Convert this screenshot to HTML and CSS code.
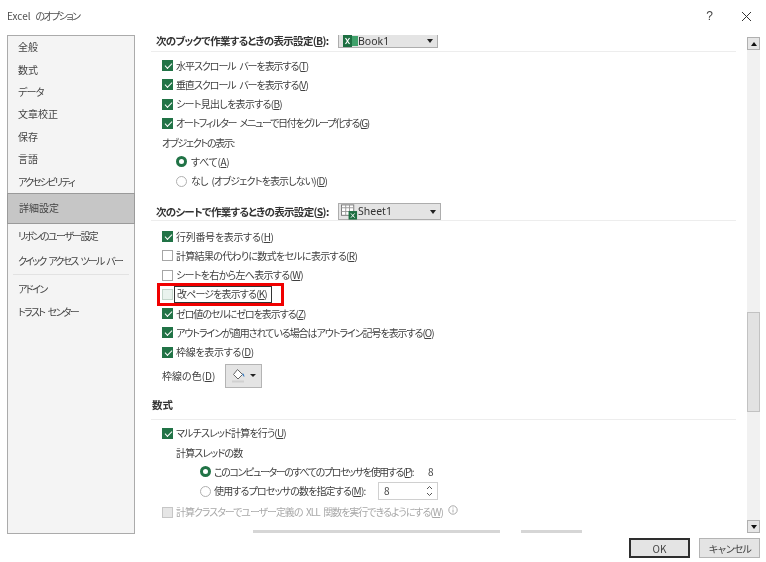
FILE: index.html
```html
<!DOCTYPE html>
<html lang="ja">
<head>
<meta charset="utf-8">
<title>Excel のオプション</title>
<link rel="stylesheet" href="styles.css">
</head>
<body>
<div class="dialog">
  <header class="titlebar">
    <span class="title">Excel <span class="ls-6">のオプション</span></span>
    <span class="help">?</span>
    <svg class="close" width="11" height="11" viewBox="0 0 11 11"><path d="M1 1l9 9M10 1l-9 9" stroke="#333" stroke-width="1" fill="none"/></svg>
  </header>
  <div class="content">
    <nav class="sidebar">
      <div class="nav">全般</div>
      <div class="nav">数式</div>
      <div class="nav ls-2">データ</div>
      <div class="nav">文章校正</div>
      <div class="nav">保存</div>
      <div class="nav">言語</div>
      <div class="nav ls-7">アクセシビリティ</div>
      <div class="nav selected">詳細設定</div>
      <div class="nav wide ls-6">リボンのユーザー設定</div>
      <div class="nav wide ls-7">クイック アクセス ツール バー</div>
      <div class="nav-sep"></div>
      <div class="nav ls-6">アドイン</div>
      <div class="nav ls-6">トラスト センター</div>
    </nav>
    <main class="main">
      <div class="head head-first">
        <span class="head-label">次のブックで作業するときの表示設定(<u>B</u>):</span>
        <div class="combo combo-book">
          <svg width="15" height="12" viewBox="0 0 15 12"><rect x="5" y="1" width="10" height="10" fill="#3fa06a"/><rect x="0" y="0" width="9" height="12" fill="#1d6f42"/><path d="M2.500 3l4 6M6.500 3l-4 6" stroke="#fff" stroke-width="1.200"/></svg>
          <span class="combo-text">Book1</span>
          <span class="tri"></span>
        </div>
      </div>
      <div class="block block-1">
        <div class="row ls-4"><span class="box on"></span><span>水平スクロール バーを表示する(<u>T</u>)</span></div>
        <div class="row ls-4"><span class="box on"></span><span>垂直スクロール バーを表示する(<u>V</u>)</span></div>
        <div class="row ls-2"><span class="box on"></span><span>シート見出しを表示する(<u>B</u>)</span></div>
        <div class="row ls-5"><span class="box on"></span><span>オートフィルター メニューで日付をグループ化する(<u>G</u>)</span></div>
        <div class="row ls-5"><span>オブジェクトの表示:</span></div>
        <div class="row radio-row ls-1"><span class="radio on"></span><span>すべて(<u>A</u>)</span></div>
        <div class="row radio-row ls-3"><span class="radio"></span><span>なし (オブジェクトを表示しない)(<u>D</u>)</span></div>
      </div>
      <div class="head head-second">
        <span class="head-label">次のシートで作業するときの表示設定(<u>S</u>):</span>
        <div class="combo combo-sheet">
          <svg width="17" height="16" viewBox="0 0 18 16"><rect x=".5" y=".5" width="13" height="11" fill="#fff" stroke="#777"/><path d="M.5 3.500h13M.5 7.500h13M5 .5v11M9 .5v11" stroke="#999" fill="none"/><rect x="8" y="7" width="9" height="9" fill="#1d6f42"/><path d="M10.500 9.500l4 4.500M14.500 9.500l-4 4.500" stroke="#fff"/></svg>
          <span class="combo-text">Sheet1</span>
          <span class="tri"></span>
        </div>
      </div>
      <div class="block block-2">
        <div class="row ls-1"><span class="box on"></span><span>行列番号を表示する(<u>H</u>)</span></div>
        <div class="row ls-2"><span class="box"></span><span>計算結果の代わりに数式をセルに表示する(<u>R</u>)</span></div>
        <div class="row ls-2"><span class="box"></span><span>シートを右から左へ表示する(<u>W</u>)</span></div>
        <div class="row ls-3 flagged">
          <span class="box hover"></span><span class="focus">改ページを表示する(<u>K</u>)</span>
          <span class="redbox"></span>
        </div>
        <div class="row ls-4"><span class="box on"></span><span>ゼロ値のセルにゼロを表示する(<u>Z</u>)</span></div>
        <div class="row ls-4"><span class="box on"></span><span>アウトラインが適用されている場合はアウトライン記号を表示する(<u>O</u>)</span></div>
        <div class="row ls-1"><span class="box on"></span><span>枠線を表示する(<u>D</u>)</span></div>
        <div class="color-row">
          <span class="color-label">枠線の色(<u>D</u>)</span>
          <div class="color-btn">
            <svg width="14" height="15" viewBox="0 0 14 15"><path d="M5.500 1.500L10.500 6.500 6 11 1.500 6.500z" fill="#fff" stroke="#666"/><path d="M10.500 5c1.500 1 2 2.500 1.800 4-.8-.3-1.800-1.500-1.800-4z" fill="#2f78c4"/><rect x="0" y="12.500" width="12" height="2" fill="#d0d0d0"/></svg>
            <span class="tri tri-small"></span>
          </div>
        </div>
      </div>
      <div class="head head-third"><span class="head-label head-short">数式</span></div>
      <div class="block block-3">
        <div class="row ls-3"><span class="box on"></span><span>マルチスレッド計算を行う(<u>U</u>)</span></div>
        <div class="row plain-in ls-3"><span>計算スレッドの数</span></div>
        <div class="row radio-row2"><span class="radio on"></span><span class="proc-label ls-tight">このコンピューターのすべてのプロセッサを使用する(<u>P</u>):</span><span class="val">8</span></div>
        <div class="row radio-row2"><span class="radio"></span><span class="spin-label ls-3">使用するプロセッサの数を指定する(<u>M</u>):</span>
          <div class="spin"><span>8</span><span class="arrows"><svg width="7" height="12" viewBox="0 0 7 12"><path d="M1 4l2.500-2.500L6 4M1 8l2.500 2.500L6 8" stroke="#555" fill="none"/></svg></span></div>
        </div>
        <div class="row disabled ls-4"><span class="box dis"></span><span>計算クラスターでユーザー定義の XLL 関数を実行できるようにする(<u>W</u>)</span>
          <svg class="info" width="10" height="10" viewBox="0 0 10 10"><circle cx="5" cy="5" r="4.200" fill="none" stroke="#aaa"/><path d="M5 4.500v3M5 2.500v1" stroke="#aaa"/></svg>
        </div>
      </div>
      <div class="cut-btns"><span class="cut cut-a"></span><span class="cut cut-b"></span></div>
    </main>
    <aside class="scrollbar">
      <div class="sb-btn"><span class="tri tri-up"></span></div>
      <div class="sb-track"><div class="sb-thumb"></div></div>
      <div class="sb-btn"><span class="tri tri-down"></span></div>
    </aside>
  </div>
  <footer class="footer">
    <button class="btn btn-default">OK</button>
    <button class="btn ls-6">キャンセル</button>
  </footer>
</div>
</body>
</html>
```

FILE: styles.css
```css
* { box-sizing: border-box; }
html, body { margin: 0; padding: 0; background: #fff; }
body {
  font-family: "Noto Sans CJK JP", "Noto Sans", sans-serif;
  font-size: 10px;
  color: #404040;
  font-feature-settings: "palt";
  line-height: 1;
  white-space: nowrap;
  word-spacing: 2.500px;
}
u { text-underline-offset: 1px; }
.ls-1 { letter-spacing: -0.3px; }
.ls-2 { letter-spacing: -0.7px; }
.ls-3 { letter-spacing: -0.85px; }
.ls-4 { letter-spacing: -1.05px; }
.ls-5 { letter-spacing: -1.3px; }
.ls-tight { letter-spacing: -1.4px; }
.ls-6 { letter-spacing: -1.6px; }
.ls-7 { letter-spacing: -1.8px; }

.dialog { width: 766px; height: 562px; display: flex; flex-direction: column; overflow: hidden; background: #fff; filter: blur(0.3px); }

.titlebar { height: 35px; flex: none; display: flex; align-items: center; padding: 0 14px 3px 7px; }
.title { flex: 1; color: #505050; }
.help { font-size: 12px; margin-right: 28px; color: #444; font-family: "Liberation Sans", sans-serif; }

.content { height: 499px; flex: none; display: flex; padding-left: 7px; }
.sidebar { width: 128px; flex: none; border: 1px solid #ababab; background: #f4f4f4; }
.nav { height: 22.4px; display: flex; align-items: center; padding-left: 10px; color: #444; }
.nav.selected { height: 31px; margin: 0 -1px; padding-left: 11px; background: #c6c6c6; border: 1px solid #9a9a9a; }
.nav.wide { height: 25px; }
.nav-sep { height: 1px; background: #e2e2e2; margin: 0 5px 3px; }
.nav-sep + .nav, .nav-sep + .nav + .nav { height: 23px; }

.main { width: 585px; flex: none; margin-left: 16px; position: relative; display: flex; flex-direction: column; }
.head { display: flex; align-items: flex-start; border-bottom: 1px solid #ededed; padding-left: 5px; flex: none; }
.head-label { font-weight: 700; color: #333; font-size: 10.5px; width: 170px; letter-spacing: -0.7px; }
.head-short { letter-spacing: 0; margin-left: -4px; }
.head-first { height: 17px; }
.head-first .head-label { margin-top: 1px; }
.head-second { height: 14px; margin-top: 17px; }
.head-third { height: 22px; margin-top: 10px; padding-top: 2px; }

.combo { background: #e4e4e4; border: 1px solid #adadad; display: flex; align-items: center; position: relative; margin-left: 12px; flex: none; }
.combo-book { width: 100px; height: 13px; border-top: 0; padding-left: 4px; gap: 0; }
.combo-sheet { width: 103px; height: 17px; margin-top: -4px; padding-left: 2px; }
.combo-text { font-family: "Noto Sans", sans-serif; font-size: 10.5px; color: #333; letter-spacing: 0; }
.tri { width: 0; height: 0; border-left: 3.500px solid transparent; border-right: 3.500px solid transparent; border-top: 4px solid #222; }
.combo .tri { position: absolute; right: 4px; top: 50%; margin-top: -2px; }

.block { display: flex; flex-direction: column; flex: none; }
.block-1 { margin-top: 4px; height: 134px; }
.block-2 { margin-top: 6px; }
.block-3 { margin-top: 4px; }
.row { height: 19.250px; display: flex; align-items: center; padding-left: 11px; flex: none; position: relative; }
.box { width: 11px; height: 11px; flex: none; margin-right: 3px; border: 1px solid #a6a6a6; background: #fff; position: relative; }
.box.on { background: #217346; border-color: #217346; }
.box.on::after { content: ""; position: absolute; left: 2px; top: 2px; width: 6px; height: 3px; border-left: 1.300px solid #fff; border-bottom: 1.300px solid #fff; transform: rotate(-45deg); }
.box.hover { background: #e9f3ee; border-color: #c3d6cb; }
.box.dis { background: #e6e6e6; border-color: #c6c6c6; }
.focus { outline: 1px solid #333; padding: 2px 4px 3px 2px; margin-left: -1px; }
.redbox { position: absolute; left: 6px; top: -2px; width: 127px; height: 23px; border: 3px solid #f00000; }
.radio-row { padding-left: 25px; }
.radio-row .radio { margin-right: 4px; }
.radio { width: 11px; height: 11px; flex: none; border-radius: 50%; border: 1px solid #b0b0b0; background: #fff; margin-right: 3px; }
.radio.on { border: 3px solid #217346; }
.plain-in { padding-left: 25px; }
.radio-row2 { padding-left: 49px; }
.proc-label { width: 214px; }
.spin-label { width: 164px; }
.spin { width: 60px; height: 18px; border: 1px solid #d0d0d0; display: flex; align-items: center; justify-content: space-between; padding: 0 4px 0 5px; background: #fff; }
.arrows { display: flex; }
.disabled { color: #a8a8a8; margin-top: 2px; }
.info { margin-left: 5px; margin-top: -5px; }
.color-row { height: 24px; display: flex; align-items: center; padding-left: 11px; margin-top: 2px; flex: none; }
.color-label { width: 53px; }
.color-btn { width: 37px; height: 24px; margin-left: 10px; border: 1px solid #b4b4b4; background: #e4e4e4; display: flex; align-items: center; justify-content: center; gap: 4px; }
.tri-small { border-left-width: 3px; border-right-width: 3px; border-top-width: 3px; }

.cut-btns { display: flex; padding-left: 102px; margin-top: 8px; gap: 21px; flex: none; }
.cut { height: 3px; background: #d6d6d6; }
.cut-a { width: 247px; }
.cut-b { width: 61px; }

.scrollbar { width: 13px; flex: none; margin-left: 11px; margin-top: 2px; margin-bottom: 1px; display: flex; flex-direction: column; background: #f1f1f1; }
.sb-btn { height: 13px; flex: none; background: #e6e6e6; border: 1px solid #b0b0b0; display: flex; align-items: center; justify-content: center; }
.tri-up { border-top: 0; border-bottom: 4px solid #111; }
.tri-down { border-top: 4px solid #111; }
.sb-track { flex: 1; padding-top: 262px; }
.sb-thumb { height: 100px; background: #e2e2e2; border: 1px solid #c2c2c2; }

.footer { flex: 1; display: flex; justify-content: flex-end; gap: 9px; padding: 4px 6px 0 0; align-items: flex-start; }
.btn { width: 61px; height: 20px; background: #e4e4e4; border: 1px solid #b4b4b4; font-family: inherit; font-size: 10px; color: #444; padding: 0; }
.btn-default { border: 2px solid #2e2e2e; }
```
